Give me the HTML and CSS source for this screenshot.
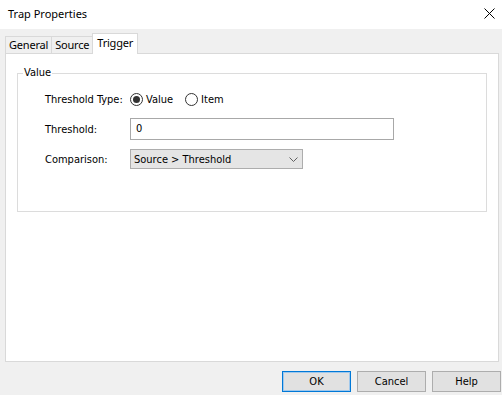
FILE: index.html
```html
<!DOCTYPE html>
<html lang="en">
<head>
    <meta charset="UTF-8">
    <title>Trap Properties</title>
    <link rel="stylesheet" href="styles.css">
</head>
<body>
    <div class="titlebar">
        <span class="title">Trap Properties</span>
        <svg class="close" width="11" height="11" viewBox="0 0 11 11">
            <path d="M0.5 0.5 L10.5 10.5 M10.5 0.5 L0.5 10.5" stroke="#000" stroke-width="1" fill="none"/>
        </svg>
    </div>

    <div class="tabs">
        <div class="tab">General</div>
        <div class="tab">Source</div>
        <div class="tab active">Trigger</div>
    </div>

    <div class="panel">
        <fieldset class="group">
            <legend>Value</legend>
            <div class="row row-type">
                <span class="label">Threshold Type:</span>
                <span class="radio checked"></span>
                <span class="radio-text">Value</span>
                <span class="radio"></span>
                <span class="radio-text">Item</span>
            </div>
            <div class="row row-threshold">
                <span class="label">Threshold:</span>
                <div class="textbox">0</div>
            </div>
            <div class="row row-compare">
                <span class="label">Comparison:</span>
                <div class="combo">
                    <span>Source &gt; Threshold</span>
                    <svg width="9" height="5" viewBox="0 0 9 5">
                        <path d="M0.5 0.5 L4.5 4.5 L8.5 0.5" stroke="#606060" stroke-width="1" fill="none"/>
                    </svg>
                </div>
            </div>
        </fieldset>
    </div>

    <div class="buttons">
        <button class="btn default">OK</button>
        <button class="btn">Cancel</button>
        <button class="btn">Help</button>
    </div>
</body>
</html>
```

FILE: styles.css
```css
body {
    margin: 0;
    background-color: #f0f0f0;
    font-family: "DejaVu Sans Condensed", "DejaVu Sans", sans-serif;
    font-size: 11px;
    color: #000;
    width: 502px;
    height: 395px;
    overflow: hidden;
}
.titlebar {
    height: 29px;
    background-color: #fff;
    display: flex;
    align-items: center;
    justify-content: space-between;
    padding: 0 7px 0 8px;
}
.title {
    font-family: "Noto Sans", sans-serif;
    font-size: 11px;
    margin-top: -2px;
}
.close {
    margin-top: -3px;
}
.tabs {
    display: flex;
    align-items: flex-end;
    margin: 6px 0 0 5px;
    height: 18px;
    position: relative;
    z-index: 1;
}
.tab {
    font-family: "Noto Sans", sans-serif;
    font-size: 11px;
    letter-spacing: -0.2px;
    height: 17px;
    line-height: 16px;
    padding: 0 3px;
    border: 1px solid #d9d9d9;
    border-bottom: none;
    margin-right: -1px;
    background-color: #f0f0f0;
    box-sizing: border-box;
}
.tab.active {
    line-height: 17px;
    background-color: #fff;
    margin-bottom: -1px;
    height: 21px;
    padding: 0 4px;
}
.panel {
    margin: 0 3px 0 5px;
    height: 309px;
    background-color: #fff;
    border: 1px solid #d9d9d9;
    box-sizing: border-box;
}
.group {
    margin: 11px 11px 0 11px;
    padding: 7px 0 42px 27px;
    border: 1px solid #dcdcdc;
}
.group legend {
    padding: 0 1px;
    margin-left: -22px;
    line-height: 16px;
}
.row {
    display: flex;
    align-items: center;
    height: 22px;
}
.row-threshold {
    margin-top: 8px;
}
.row-compare {
    margin-top: 9px;
    height: 20px;
}
.label {
    width: 85px;
    flex-shrink: 0;
}
.radio {
    width: 13px;
    height: 13px;
    border: 1px solid #333;
    border-radius: 50%;
    box-sizing: border-box;
    display: flex;
    align-items: center;
    justify-content: center;
}
.radio.checked::after {
    content: "";
    width: 7px;
    height: 7px;
    border-radius: 50%;
    background-color: #333;
}
.radio-text {
    margin: 0 12px 0 3px;
}
.textbox {
    width: 264px;
    height: 22px;
    border: 1px solid #a8a8a8;
    box-sizing: border-box;
    padding: 0 5px;
    line-height: 19px;
    background-color: #fff;
}
.combo {
    width: 173px;
    height: 20px;
    border: 1px solid #adadad;
    background-color: #e5e5e5;
    box-sizing: border-box;
    display: flex;
    align-items: center;
    justify-content: space-between;
    padding: 0 4px 0 3px;
}
.buttons {
    display: flex;
    justify-content: flex-end;
    gap: 6px;
    margin: 9px 1px 0 0;
}
.btn {
    width: 69px;
    height: 21px;
    font-family: "DejaVu Sans Condensed", "DejaVu Sans", sans-serif;
    font-size: 11px;
    color: #000;
    background-color: #e1e1e1;
    border: 1px solid #adadad;
    padding: 0;
    margin: 0;
}
.btn.default {
    border: 1px solid #0078d7;
    box-shadow: inset 0 0 0 1px #a0c8ec;
}
```
